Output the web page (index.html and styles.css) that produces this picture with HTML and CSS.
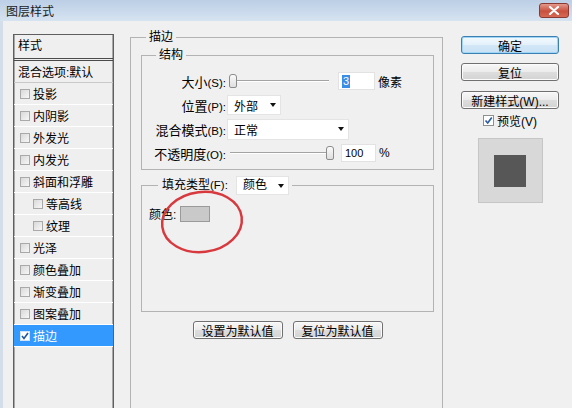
FILE: index.html
```html
<!DOCTYPE html>
<html lang="zh-CN">
<head>
    <meta charset="UTF-8">
    <meta name="viewport" content="width=device-width, initial-scale=1.0">
    <title>图层样式</title>
    <link rel="stylesheet" href="styles.css">
</head>
<body>
    <div class="titlebar">
        <span class="title">图层样式</span>
        <span class="close">
            <svg width="12" height="9" viewBox="0 0 12 9"><path d="M2 1 L10 8 M10 1 L2 8" stroke="#fff" stroke-width="2.2" stroke-linecap="round"/></svg>
        </span>
    </div>

    <div class="content">
        <div class="style-list">
            <div class="list-head">样式</div>
            <div class="list-item blend">混合选项:默认</div>
            <div class="list-item"><span class="check"></span>投影</div>
            <div class="list-item"><span class="check"></span>内阴影</div>
            <div class="list-item"><span class="check"></span>外发光</div>
            <div class="list-item"><span class="check"></span>内发光</div>
            <div class="list-item"><span class="check"></span>斜面和浮雕</div>
            <div class="list-item sub"><span class="check"></span>等高线</div>
            <div class="list-item sub"><span class="check"></span>纹理</div>
            <div class="list-item"><span class="check"></span>光泽</div>
            <div class="list-item"><span class="check"></span>颜色叠加</div>
            <div class="list-item"><span class="check"></span>渐变叠加</div>
            <div class="list-item"><span class="check"></span>图案叠加</div>
            <div class="list-item selected">
                <span class="check on">
                    <svg width="8" height="8" viewBox="0 0 8 8"><path d="M1 4 L3 6.5 L7 1" stroke="#23569a" stroke-width="1.6" fill="none"/></svg>
                </span>描边
            </div>
        </div>

        <fieldset class="group stroke">
            <legend>描边</legend>

            <fieldset class="group structure">
                <legend>结构</legend>
                <div class="form-grid">
                    <label>大小<span class="key">(S):</span></label>
                    <div class="ctrl">
                        <div class="slider size"><span class="thumb"></span><span class="track"></span></div>
                        <div class="num"><span class="sel">3</span></div>
                        <span class="unit">像素</span>
                    </div>

                    <label>位置<span class="key">(P):</span></label>
                    <div class="ctrl">
                        <div class="select pos"><span>外部</span><span class="caret"></span></div>
                    </div>

                    <label>混合模式<span class="key">(B):</span></label>
                    <div class="ctrl">
                        <div class="select mode"><span>正常</span><span class="caret"></span></div>
                    </div>

                    <label>不透明度<span class="key">(O):</span></label>
                    <div class="ctrl">
                        <div class="slider opacity"><span class="track"></span><span class="thumb"></span></div>
                        <div class="num small">100</div>
                        <span class="unit">%</span>
                    </div>
                </div>
            </fieldset>

            <fieldset class="group fill">
                <legend>
                    <span>填充类型<span class="key">(F):</span></span>
                    <span class="select kind"><span>颜色</span><span class="caret"></span></span>
                </legend>
                <div class="fill-body">
                    <div class="color-row">
                        <span>颜色:</span>
                        <span class="swatch"></span>
                    </div>
                </div>
            </fieldset>

            <div class="defaults">
                <button class="btn wide">设置为默认值</button>
                <button class="btn wide">复位为默认值</button>
            </div>
        </fieldset>

        <div class="actions">
            <button class="btn focus">确定</button>
            <button class="btn">复位</button>
            <button class="btn">新建样式(W)...</button>
            <div class="preview-check">
                <span class="box">
                    <svg width="9" height="9" viewBox="0 0 9 9"><path d="M1.5 4.5 L3.7 7 L7.8 1.5" stroke="#2b5ca6" stroke-width="1.7" fill="none"/></svg>
                </span>
                <span>预览(V)</span>
            </div>
            <div class="preview">
                <div class="preview-inner"></div>
            </div>
        </div>
    </div>

    <svg class="mark" width="92" height="72" viewBox="0 0 92 72">
        <ellipse cx="46" cy="36" rx="40" ry="30" transform="rotate(-7 46 36)" fill="none" stroke="#d8393f" stroke-width="2.5"/>
    </svg>
</body>
</html>
```

FILE: styles.css
```css
html, body {
    margin: 0;
    padding: 0;
}

body {
    width: 572px;
    height: 408px;
    overflow: hidden;
    position: relative;
    background-color: #f0f0f0;
    font-family: "Liberation Sans", "Noto Sans CJK SC", sans-serif;
    font-size: 12px;
    color: #000000;
}

.titlebar {
    height: 21px;
    background: linear-gradient(#bccfe6, #d6e3f1);
    display: flex;
    align-items: center;
    justify-content: space-between;
    padding: 0 3px 0 6px;
}

.title {
    color: #1a1a1a;
}

.close {
    width: 30px;
    height: 15px;
    box-sizing: border-box;
    border: 1px solid #8a3a32;
    border-radius: 3px;
    background: linear-gradient(#e3998c, #c9503f 55%, #d66a55);
    display: flex;
    align-items: center;
    justify-content: center;
}

.close svg {
    display: block;
}

.content {
    display: flex;
    align-items: flex-start;
    border-left: 3px solid #d3deea;
    padding-left: 10px;
    height: 387px;
}

/* style list */
.style-list {
    margin-top: 13px;
    width: 101px;
    height: 380px;
    box-sizing: border-box;
    border: 1px solid #5f5f5f;
    box-shadow: inset 1px 0 0 #a8a8a8, inset -1px 0 0 #a8a8a8;
    background-color: #efefef;
    flex-shrink: 0;
}

.list-head {
    height: 23px;
    line-height: 23px;
    padding-left: 4px;
    border-bottom: 3px double #4a4a4a;
}

.list-item {
    height: 21px;
    border-bottom: 1px solid #ffffff;
    display: flex;
    align-items: center;
    padding-left: 6px;
}

.list-item.blend {
    padding-left: 4px;
    border-bottom-color: #c9c9c9;
}

.list-item.sub {
    padding-left: 19px;
}

.list-item.selected {
    background-color: #3399ff;
    color: #ffffff;
}

.check {
    width: 8px;
    height: 8px;
    border: 1px solid #a9a9a9;
    background: linear-gradient(135deg, #d9d9d9, #f7f7f7);
    margin-right: 3px;
    display: flex;
    align-items: center;
    justify-content: center;
}

.check.on {
    background: #ffffff;
    border-color: #d0e3f7;
}

/* fieldsets */
.group {
    margin: 0;
    border: 1px solid #b3b3b3;
    min-width: 0;
}

.group > legend {
    padding: 0 3px;
    line-height: 14px;
}

.stroke {
    margin-top: 9px;
    margin-left: 16px;
    width: 313px;
    height: 400px;
    box-sizing: border-box;
    padding: 4px 8px 0 10px;
    flex-shrink: 0;
}

.stroke > legend {
    margin-left: 5px;
}

.structure {
    padding: 7px 0 4px 0;
}

.structure > legend {
    margin-left: 14px;
}

.form-grid {
    display: grid;
    grid-template-columns: 84px 1fr;
    grid-auto-rows: 24px;
    column-gap: 1px;
    align-items: center;
}

.form-grid label {
    text-align: right;
    font-size: 13px;
}

.key {
    font-size: 11.5px;
}

.ctrl {
    display: flex;
    align-items: center;
}

.slider {
    display: flex;
    align-items: center;
    height: 16px;
}

.slider.size {
    width: 100px;
    margin-left: 2px;
    margin-right: 9px;
}

.slider.opacity {
    width: 104px;
    margin-left: 3px;
    margin-right: 7px;
}

.track {
    flex: 1;
    height: 1px;
    background-color: #a3a3a3;
    border-bottom: 1px solid #ffffff;
}

.thumb {
    width: 6px;
    height: 12px;
    border: 1px solid #8c8c8c;
    border-radius: 3px 3px 2px 2px;
    background: linear-gradient(#fbfbfb, #dedede);
}

.num {
    width: 37px;
    height: 18px;
    box-sizing: border-box;
    background-color: #ffffff;
    border: 1px solid #e2e2e2;
    padding-left: 3px;
    display: flex;
    align-items: center;
    font-size: 11px;
}

.num.small {
    width: 35px;
}

.sel {
    background-color: #3a8ee6;
    color: #ffffff;
    padding: 0 1px;
    line-height: 13px;
}

.unit {
    margin-left: 3px;
}

.select {
    display: flex;
    align-items: center;
    justify-content: space-between;
    box-sizing: border-box;
    height: 20px;
    background-color: #ffffff;
    border: 1px solid #e4e4e4;
    padding: 0 4px 0 6px;
}

.select.pos {
    width: 54px;
}

.select.mode {
    width: 122px;
    height: 21px;
}

.select.kind {
    width: 53px;
    height: 19px;
}

.caret {
    width: 0;
    height: 0;
    border-left: 3.5px solid transparent;
    border-right: 3.5px solid transparent;
    border-top: 4px solid #111111;
}

.fill {
    margin-top: 6px;
    padding: 0 7px;
}

.fill > legend {
    display: flex;
    align-items: center;
    gap: 8px;
    padding: 0 3px 0 4px;
    margin-left: 9px;
    line-height: 19px;
}

.fill-body {
    height: 116px;
    padding-top: 10px;
    box-sizing: border-box;
}

.color-row {
    display: flex;
    align-items: center;
    gap: 4px;
}

.swatch {
    width: 30px;
    height: 16px;
    box-sizing: border-box;
    border: 1px solid #9a9a9a;
    background-color: #c9c9c9;
}

.defaults {
    display: flex;
    justify-content: center;
    gap: 10px;
    margin-top: 9px;
}

/* buttons */
.btn {
    font: inherit;
    color: #000000;
    height: 18px;
    padding: 0;
    border: 1px solid #707070;
    border-radius: 3px;
    background: linear-gradient(#f7f7f7, #ececec 48%, #dddddd 52%, #d3d3d3);
    box-shadow: inset 0 0 0 1px #fbfbfb;
}

.btn.wide {
    width: 90px;
}

.btn.focus {
    border-color: #3c7fb1;
    box-shadow: inset 0 0 0 1px #9fd5f6;
    background: linear-gradient(#f3f9fd, #e4f1fb 48%, #d2e7f7 52%, #c9e1f4);
}

.actions {
    margin-left: 18px;
    margin-top: 15px;
    width: 98px;
    display: flex;
    flex-direction: column;
}

.actions .btn {
    width: 98px;
    margin-bottom: 9px;
}

.actions .btn:nth-child(2) {
    margin-bottom: 10px;
}

.actions .btn:nth-child(3) {
    margin-bottom: 5px;
}

.preview-check {
    height: 13px;
    display: flex;
    align-items: center;
    justify-content: center;
    gap: 3px;
}

.preview-check .box {
    width: 9px;
    height: 9px;
    border: 1px solid #8e8f8f;
    background-color: #ffffff;
    display: flex;
    align-items: center;
    justify-content: center;
}

.preview {
    margin-top: 11px;
    align-self: center;
    width: 65px;
    height: 65px;
    box-sizing: border-box;
    border: 1px solid #c6c6c6;
    background-color: #d8d8d8;
    display: flex;
    align-items: center;
    justify-content: center;
}

.preview-inner {
    width: 32px;
    height: 32px;
    background-color: #575757;
}

/* red annotation drawn over the dialog */
.mark {
    position: absolute;
    left: 156px;
    top: 186px;
}
```
